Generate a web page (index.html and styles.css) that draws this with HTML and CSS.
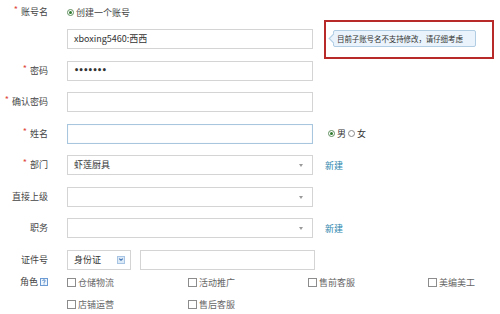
FILE: index.html
```html
<!DOCTYPE html>
<html lang="zh-CN">
<head>
<meta charset="utf-8">
<title>新建子账号</title>
<link rel="stylesheet" href="styles.css">
</head>
<body>
<div class="form">
  <div class="row first">
    <div class="label"><span class="req">*</span>账号名</div>
    <div class="field"><span class="radio on"></span><span class="opt">创建一个账号</span></div>
  </div>
  <div class="row">
    <div class="label"></div>
    <div class="field rel">
      <div class="input">xboxing5460:西西</div>
      <div class="callout">
        <div class="tip"><span class="tip-arrow"></span>目前子账号名不支持修改，请仔细考虑</div>
      </div>
    </div>
  </div>
  <div class="row">
    <div class="label"><span class="req">*</span>密码</div>
    <div class="field"><div class="input pwd">•••••••</div></div>
  </div>
  <div class="row">
    <div class="label"><span class="req">*</span>确认密码</div>
    <div class="field"><div class="input"></div></div>
  </div>
  <div class="row">
    <div class="label"><span class="req">*</span>姓名</div>
    <div class="field">
      <div class="input focus"></div>
      <div class="gender"><span class="radio on"></span><span>男</span><span class="radio"></span><span>女</span></div>
    </div>
  </div>
  <div class="row">
    <div class="label"><span class="req">*</span>部门</div>
    <div class="field">
      <div class="input select">虾莲厨具<span class="caret"></span></div>
      <a class="link">新建</a>
    </div>
  </div>
  <div class="row">
    <div class="label">直接上级</div>
    <div class="field"><div class="input select"><span class="caret"></span></div></div>
  </div>
  <div class="row">
    <div class="label">职务</div>
    <div class="field">
      <div class="input select"><span class="caret"></span></div>
      <a class="link">新建</a>
    </div>
  </div>
  <div class="row">
    <div class="label">证件号</div>
    <div class="field">
      <div class="idtype">身份证<span class="dd"><svg width="7" height="7" viewBox="0 0 7 7"><path d="M1.5 2.5 L3.5 4.5 L5.5 2.5" fill="none" stroke="#3a6fb0" stroke-width="1.2"/></svg></span></div>
      <div class="input idnum"></div>
    </div>
  </div>
  <div class="roles">
    <div class="label role-label">角色<svg class="help" width="8" height="8" viewBox="0 0 8 8"><rect x="0.5" y="0.5" width="7" height="7" fill="#eef5fc" stroke="#6b9bd2"/><path d="M2.6 3 Q2.8 1.8 4 1.8 Q5.3 1.9 5.2 3 Q5.1 3.8 4 4.2 L4 5" fill="none" stroke="#4a7fc0" stroke-width="0.9"/><rect x="3.6" y="5.6" width="0.9" height="0.9" fill="#4a7fc0"/></svg></div>
    <div class="checks">
      <label class="chk"><span class="box"></span>仓储物流</label>
      <label class="chk"><span class="box"></span>活动推广</label>
      <label class="chk"><span class="box"></span>售前客服</label>
      <label class="chk"><span class="box"></span>美编美工</label>
      <label class="chk"><span class="box"></span>店铺运营</label>
      <label class="chk"><span class="box"></span>售后客服</label>
    </div>
  </div>
</div>
</body>
</html>
```

FILE: styles.css
```css
html, body {
  margin: 0;
  padding: 0;
  background: #fff;
}
body {
  width: 500px;
  height: 314px;
  overflow: hidden;
  font-family: "Noto Sans CJK SC", "Noto Sans", sans-serif;
  font-size: 9px;
  color: #333;
}
.form {
  padding-top: 2px;
  display: flex;
  flex-direction: column;
  gap: 11.5px;
}
.row {
  display: grid;
  grid-template-columns: 48px 1fr;
  column-gap: 19px;
  height: 20px;
  align-items: center;
}
.row.first {
  margin-bottom: -4.5px;
}
.label {
  text-align: right;
  color: #444;
  line-height: 12px;
  white-space: nowrap;
}
.req {
  color: #e0483c;
  font-size: 9px;
  margin-right: 3px;
  position: relative;
  top: -2px;
}
.field {
  display: flex;
  align-items: center;
  height: 20px;
}
.rel {
  position: relative;
}
.radio {
  display: inline-block;
  width: 7px;
  height: 7px;
  box-sizing: border-box;
  border: 1px solid #8a8a8a;
  border-radius: 50%;
  position: relative;
  margin-right: 2px;
}
.radio.on {
  border-color: #5f8f5f;
}
.radio.on::after {
  content: "";
  position: absolute;
  left: 1px;
  top: 1px;
  width: 3px;
  height: 3px;
  border-radius: 50%;
  background: #2f7a2f;
}
.opt {
  color: #444;
}
.input {
  width: 246px;
  height: 20px;
  box-sizing: border-box;
  border: 1px solid #d4d4d4;
  background: #fff;
  padding: 0 6px;
  line-height: 18px;
  color: #333;
  position: relative;
  flex: none;
}
.input.pwd {
  font-size: 8px;
  letter-spacing: -0.5px;
  font-family: "DejaVu Sans", sans-serif;
  font-weight: bold;
}
.input.focus {
  border-color: #a9c6df;
  box-shadow: inset 0 0 1px #cfe0ef;
}
.input.select .caret {
  position: absolute;
  right: 9px;
  top: 8px;
  width: 0;
  height: 0;
  border-left: 2.5px solid transparent;
  border-right: 2.5px solid transparent;
  border-top: 3px solid #9a9a9a;
}
.link {
  margin-left: 12px;
  color: #2b86ad;
  cursor: pointer;
}
.gender {
  margin-left: 15px;
  display: flex;
  align-items: center;
  color: #333;
}
.gender span:nth-child(2) {
  margin-right: 2px;
}
.callout {
  position: absolute;
  left: 257px;
  top: -9px;
  width: 170px;
  height: 39px;
  box-sizing: border-box;
  border: 2px solid #b8292a;
}
.tip {
  position: absolute;
  left: 7px;
  top: 8px;
  width: 143px;
  height: 17px;
  box-sizing: border-box;
  background: #eaf3fb;
  border: 1px solid #b0cde4;
  border-radius: 2px;
  font-size: 7.5px;
  letter-spacing: -0.1px;
  line-height: 15px;
  padding-left: 3px;
  color: #333;
  white-space: nowrap;
}
.tip-arrow {
  position: absolute;
  left: -4px;
  top: 4px;
  width: 6px;
  height: 6px;
  background: #eaf3fb;
  border-left: 1px solid #b0cde4;
  border-bottom: 1px solid #b0cde4;
  transform: rotate(45deg);
}
.idtype {
  width: 64px;
  height: 20px;
  box-sizing: border-box;
  border: 1px solid #d4d4d4;
  padding-left: 6px;
  line-height: 18px;
  position: relative;
  color: #333;
  flex: none;
}
.dd {
  position: absolute;
  right: 5px;
  top: 5px;
  width: 8px;
  height: 8px;
  box-sizing: border-box;
  background: #dce9f7;
  border: 1px solid #a8c4e4;
  display: flex;
  align-items: center;
  justify-content: center;
}
.dd svg {
  display: block;
}
.input.idnum {
  width: 175px;
  margin-left: 9px;
}
.roles {
  display: grid;
  grid-template-columns: 48px 1fr;
  column-gap: 19px;
  margin-top: -5px;
}
.role-label {
  display: flex;
  justify-content: flex-end;
  align-items: center;
  gap: 2px;
  height: 12px;
}
.help {
  display: block;
}
.checks {
  display: grid;
  grid-template-columns: 121px 120px 120px 60px;
  row-gap: 10px;
}
.chk {
  display: flex;
  align-items: center;
  height: 12px;
  color: #666;
  white-space: nowrap;
}
.box {
  display: inline-block;
  width: 9px;
  height: 9px;
  box-sizing: border-box;
  border: 1px solid #8c8c8c;
  background: #fff;
  margin-right: 2px;
  flex: none;
}
```
